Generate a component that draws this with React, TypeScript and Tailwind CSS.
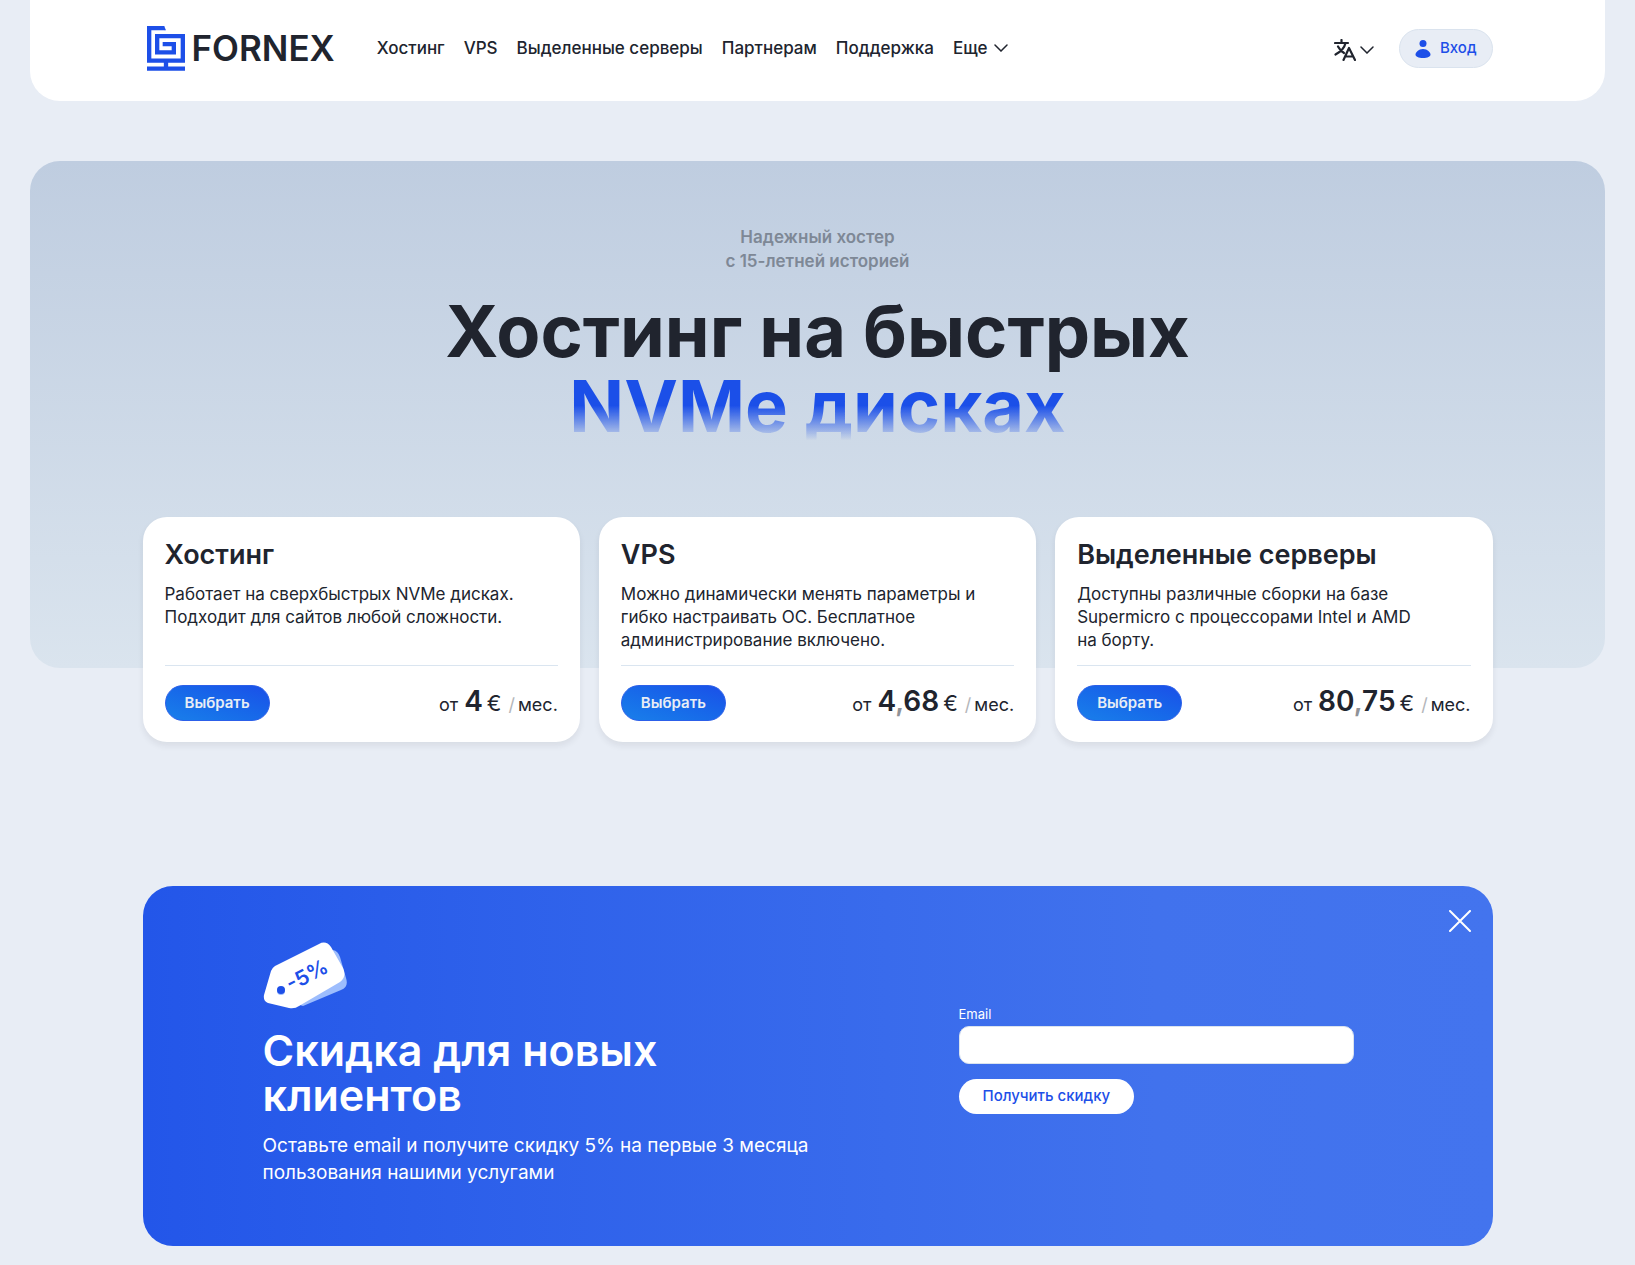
const navLinks = ["Хостинг", "VPS", "Выделенные серверы", "Партнерам", "Поддержка"];

const plans = [
  {
    name: "Хостинг",
    lines: ["Работает на сверхбыстрых NVMe дисках.", "Подходит для сайтов любой сложности."],
    price: ["4"],
  },
  {
    name: "VPS",
    lines: [
      "Можно динамически менять параметры и",
      "гибко настраивать ОС. Бесплатное",
      "администрирование включено.",
    ],
    price: ["4", "68"],
  },
  {
    name: "Выделенные серверы",
    lines: [
      "Доступны различные сборки на базе",
      "Supermicro с процессорами Intel и AMD",
      "на борту.",
    ],
    price: ["80", "75"],
  },
];

function LogoMark() {
  return (
    <svg viewBox="0 0 114 135" className="h-[45px] w-[38px]" fill="none" stroke="#1d4fe8" strokeWidth="13" aria-hidden="true">
      <path d="M52 6.500H6.500v97.500h101V30.500H30.500v48.500h50V54.500H47" />
      <path d="M57 104v24M0 128h114" />
      <path d="M51 0l6 13h-6Z" fill="#1d4fe8" stroke="none" />
    </svg>
  );
}

function Chevron() {
  return (
    <svg viewBox="0 0 14 8" className="h-2 w-3.5" fill="none" stroke="currentColor" strokeWidth="1.5" strokeLinecap="round" aria-hidden="true">
      <path d="M1 1l6 6 6-6" />
    </svg>
  );
}

function TranslateIcon() {
  return (
    <svg
      viewBox="0 0 22 22"
      className="size-[22px]"
      fill="none"
      stroke="currentColor"
      strokeWidth="2.2"
      strokeLinecap="round"
      strokeLinejoin="round"
      aria-hidden="true"
    >
      <path d="M1 4h13M7.500 1v3M11.500 4c-1 5-4.500 8.500-10 11.500M4 7.500c1.500 3 3.500 5 6 6.500" />
      <path d="M9.500 21 15 9l6 12M11.500 17.500h7.500" />
    </svg>
  );
}

function PriceTag() {
  return (
    <svg viewBox="0 0 84 68" className="h-[68px] w-[84px]" aria-hidden="true">
      <path d="M70 8q5 1 7 7l6 21q3 9-5 12L40 64 28 60Z" fill="#9dbdfd" />
      <path
        d="M8 29q1-3 4-5L56 2q7-4 12 3l12 21q4 9-3 14L36 64q-4 3-10 2L5 61q-5-2-4-8Z"
        fill="#fff"
      />
      <circle cx="18" cy="49" r="4" fill="#9dbdfd" />
      <circle cx="18" cy="48" r="4" fill="#1d4fe8" />
      <text x="28" y="50" fontSize="21" fontWeight="600" fill="#1d4fe8" transform="rotate(-28 28 50)">
        -5%
      </text>
    </svg>
  );
}

function Header() {
  return (
    <header className="rounded-b-[30px] bg-white">
      <div className="mx-auto flex h-[101px] max-w-[1350px] items-center pb-1">
        <a href="#" className="ml-1 flex items-center gap-[7px]" aria-label="Fornex">
          <LogoMark />
          <span className="text-[35px] leading-[45px] font-semibold">FORNEX</span>
        </a>
        <nav className="ml-[42px] flex items-center gap-[19px] pb-0.5 text-[17px] leading-6 font-medium">
          {navLinks.map((link) => (
            <a key={link} href="#">
              {link}
            </a>
          ))}
          <button type="button" className="flex items-center gap-[7px]">
            Еще
            <Chevron />
          </button>
        </nav>
        <button type="button" className="ml-auto flex items-center gap-1 pt-0.5" aria-label="Язык">
          <TranslateIcon />
          <Chevron />
        </button>
        <a
          href="#"
          className="ml-[25px] flex h-[39px] items-center gap-[9px] rounded-full border border-[#dae3ee] bg-[#e8edf5] px-[15px] text-[15px] font-medium text-[#1d4fe8]"
        >
          <svg viewBox="0 0 16 20" className="h-5 w-4" fill="currentColor" aria-hidden="true">
            <circle cx="8" cy="4.500" r="3.500" />
            <path d="M.5 15.500c0-2 3-5.500 7.500-5.500s7.500 3.500 7.500 5.500S12.500 19 8 19 .5 17.500.5 15.500Z" />
          </svg>
          Вход
        </a>
      </div>
    </header>
  );
}

function PlanCard({ plan }: { plan: (typeof plans)[number] }) {
  return (
    <article className="flex flex-col rounded-3xl bg-white px-[22px] pt-[21px] pb-[21px] shadow-[0_4px_6px_rgba(32,36,46,0.08)]">
      <h2 className="text-[27px] leading-[34px] font-semibold">{plan.name}</h2>
      <p className="mt-[11px] h-[69px] text-[17px] leading-[23px]">
        {plan.lines.map((line) => (
          <span key={line} className="block">
            {line}
          </span>
        ))}
      </p>
      <div className="mt-[13px] flex items-center justify-between border-t border-[#dae5f0] pt-[19px]">
        <button
          type="button"
          className="h-9 rounded-full border border-[#2c60e9] bg-linear-to-tr from-[#1a7fea] to-[#1b4fe8] px-[19px] text-[15px] leading-5 font-semibold text-[#e8edf5]"
        >
          Выбрать
        </button>
        <p className="flex h-9 items-baseline text-lg leading-8">
          <span className="mr-1.5">от</span>
          <span className="mr-1 text-[28px] leading-8 font-semibold">
            {plan.price[0]}
            {plan.price[1] && (
              <>
                <span className="text-[#909297]">,</span>
                {plan.price[1]}
              </>
            )}
          </span>
          <span className="mr-[7px] text-[22px] leading-8">€</span>
          <span className="mr-[3px] text-[#b4b6ba]">/</span>
          <span>мес.</span>
        </p>
      </div>
    </article>
  );
}

function Promo() {
  return (
    <section className="relative flex h-[360px] rounded-[30px] bg-linear-to-r from-[#2356e9] via-[#4172ed] via-75% to-[#4374ee] pl-[120px] text-white">
      <div className="w-[696px] pt-14">
        <PriceTag />
        <h2 className="mt-[18px] text-[43px] leading-[45px] font-semibold">
          Скидка для новых
          <br />
          клиентов
        </h2>
        <p className="mt-3.5 text-[19px] leading-[27px]">
          Оставьте email и получите скидку 5% на первые 3 месяца
          <br />
          пользования нашими услугами
        </p>
      </div>
      <form className="flex w-[395px] flex-col items-start pt-[118px]">
        <label htmlFor="email" className="text-[13px] leading-5">
          Email
        </label>
        <input id="email" type="email" className="mt-0.5 h-[38px] w-full rounded-[10px] border border-[#dae3ee] bg-white px-3 text-[#20242e]" />
        <button type="button" className="mt-[15px] h-[35px] rounded-full bg-white px-6 text-[15px] font-medium text-[#1d4fe8]">
          Получить скидку
        </button>
      </form>
      <button type="button" className="absolute top-6 right-[22px]" aria-label="Закрыть">
        <svg viewBox="0 0 22 22" className="size-[22px]" fill="none" stroke="currentColor" strokeWidth="2" strokeLinecap="round" aria-hidden="true">
          <path d="M1 1l20 20M21 1L1 21" />
        </svg>
      </button>
    </section>
  );
}

export default function App() {
  return (
    <div className="min-h-screen bg-[#e8edf5] px-[30px] pb-[19px] font-['Inter',sans-serif] text-[#20242e]">
      <Header />
      <main>
        <section className="mt-[60px] h-[507px] rounded-[30px] bg-linear-to-b from-[#bfcde0] to-[#dae4ee] pt-16 text-center">
          <p className="text-[17px] leading-6 font-semibold text-[#7e8896]">
            Надежный хостер
            <br />с 15-летней историей
          </p>
          <h1 className="mt-5 text-[72px] leading-[75px] font-bold">
            Хостинг на быстрых
            <br />
            <span className="bg-linear-to-b from-[#1b4fe8] from-50% to-transparent to-90% bg-clip-text text-transparent">
              NVMe дисках
            </span>
          </h1>
        </section>
        <div className="mx-auto max-w-[1350px]">
          <div className="relative -mt-[151px] grid grid-cols-3 gap-[19px]">
            {plans.map((plan) => (
              <PlanCard key={plan.name} plan={plan} />
            ))}
          </div>
          <div className="mt-36">
            <Promo />
          </div>
        </div>
      </main>
    </div>
  );
}
